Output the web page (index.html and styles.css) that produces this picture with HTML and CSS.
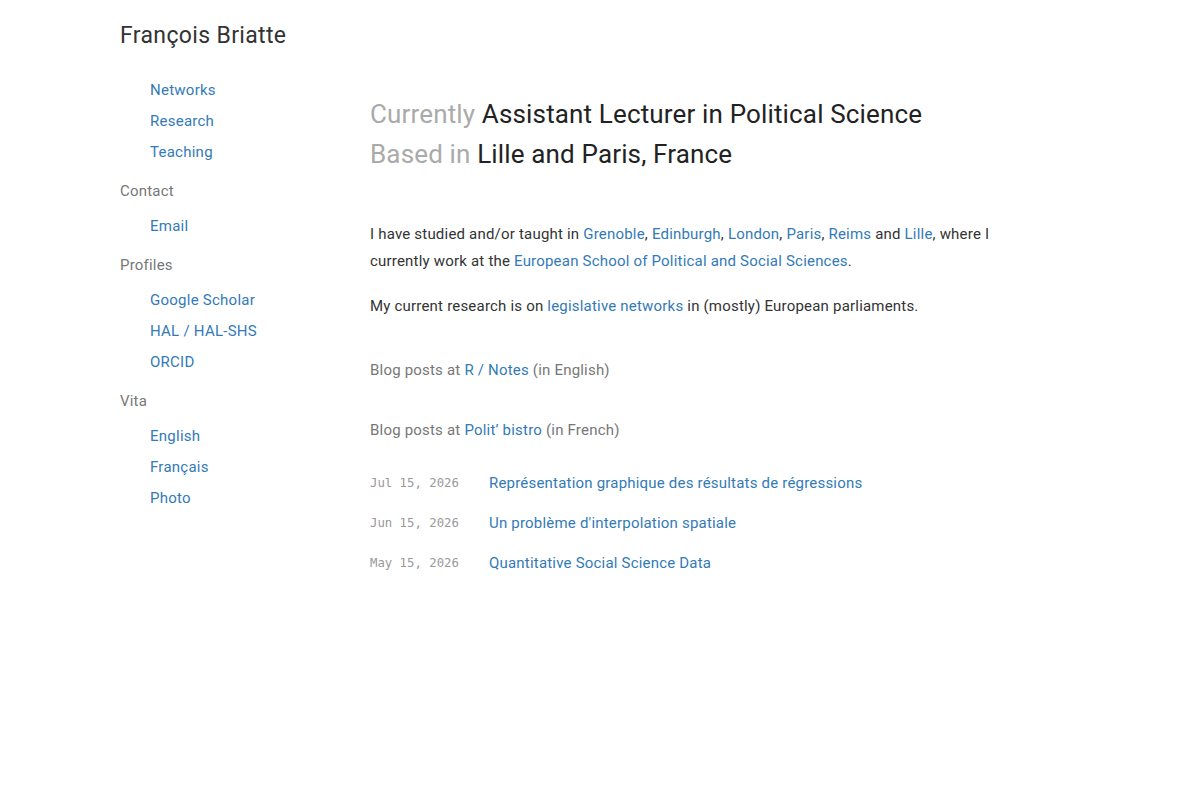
FILE: index.html
```html
<!DOCTYPE html>
<html>
  <head>
    <meta charset="utf-8">
    <title>François Briatte</title>
    <link rel="stylesheet" href="styles.css">
  </head>
  <body>
    <div id="wrap">
      <div id="side">
        <h1 class="name">François Briatte</h1>
        <ul class="nav first">
          <li><a href="#">Networks</a></li>
          <li><a href="#">Research</a></li>
          <li><a href="#">Teaching</a></li>
        </ul>
        <h3 class="label">Contact</h3>
        <ul class="nav">
          <li><a href="#">Email</a></li>
        </ul>
        <h3 class="label">Profiles</h3>
        <ul class="nav">
          <li><a href="#">Google Scholar</a></li>
          <li><a href="#">HAL / HAL-SHS</a></li>
          <li><a href="#">ORCID</a></li>
        </ul>
        <h3 class="label">Vita</h3>
        <ul class="nav">
          <li><a href="#">English</a></li>
          <li><a href="#">Français</a></li>
          <li><a href="#">Photo</a></li>
        </ul>
      </div>
      <div id="main">
        <h2 class="lead">
          <span class="muted">Currently</span> Assistant Lecturer in Political Science<br>
          <span class="muted">Based in</span> Lille and Paris, France
        </h2>
        <p>I have studied and/or taught in <a href="#">Grenoble</a>, <a href="#">Edinburgh</a>, <a href="#">London</a>, <a href="#">Paris</a>, <a href="#">Reims</a> and <a href="#">Lille</a>, where I currently work at the <a href="#">European School of Political and Social Sciences</a>.</p>
        <p>My current research is on <a href="#">legislative networks</a> in (mostly) European parliaments.</p>
        <p class="blog en">Blog posts at <a href="#">R / Notes</a> (in English)</p>
        <p class="blog">Blog posts at <a href="#">Polit’ bistro</a> (in French)</p>
        <ul class="posts">
          <li><span class="date">Jul 15, 2026</span><a href="#">Représentation graphique des résultats de régressions</a></li>
          <li><span class="date">Jun 15, 2026</span><a href="#">Un problème d'interpolation spatiale</a></li>
          <li><span class="date">May 15, 2026</span><a href="#">Quantitative Social Science Data</a></li>
        </ul>
      </div>
    </div>
  </body>
</html>
```

FILE: styles.css
```css
*{
  margin:0;
  padding:0;
}
body{
  font-family:Roboto, "Liberation Sans", sans-serif;
  font-size:15px;
  letter-spacing:0.2px;
  color:#333;
  background:#fff;
}
a{
  color:#337ab7;
  text-decoration:none;
}
#wrap{
  display:flex;
  padding:22px 0 0 120px;
}
#side{
  width:250px;
  flex:none;
}
.name{
  font-size:23px;
  font-weight:400;
  letter-spacing:0.35px;
  color:#333;
  line-height:28px;
}
.nav{
  list-style:none;
  padding-left:30px;
  margin-bottom:8px;
}
.nav.first{
  margin-top:25px;
}
.nav li{
  line-height:31px;
  letter-spacing:0.25px;
}
.label{
  font-size:15px;
  font-weight:400;
  color:#777;
  line-height:31px;
  margin-bottom:4px;
}
#main{
  width:640px;
  padding-top:72px;
}
.lead{
  font-size:26px;
  font-weight:400;
  letter-spacing:0.15px;
  line-height:40px;
  color:#222;
  margin-bottom:47px;
}
.muted{
  color:#aaa;
}
#main p{
  line-height:27px;
  margin-bottom:18px;
}
#main p.blog{
  color:#777;
  margin:33px 0 0;
}
#main p.blog.en{
  margin-top:37px;
}
.posts{
  list-style:none;
  margin-top:19px;
}
.posts li{
  display:flex;
  align-items:center;
  height:40px;
}
.date{
  width:119px;
  flex:none;
  font-family:"DejaVu Sans Mono", monospace;
  font-size:12.3px;
  letter-spacing:0;
  color:#999;
}
```
